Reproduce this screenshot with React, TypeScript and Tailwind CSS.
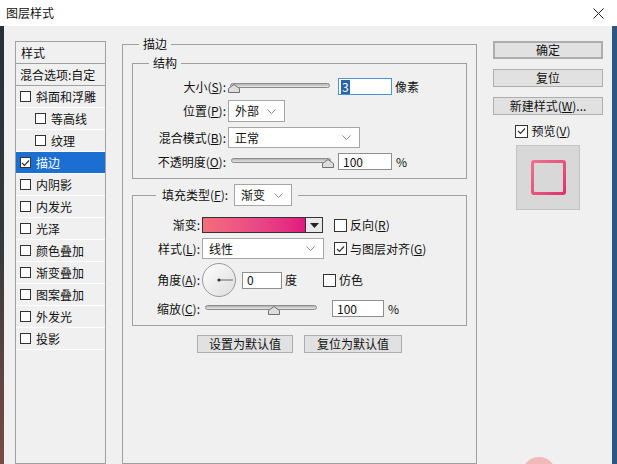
import React from "react";

// Layer style dialog (图层样式), stroke page selected
function Check({ on = false, small = false }: { on?: boolean; small?: boolean }) {
  return (
    <span
      className={
        small
          ? "flex h-[11px] w-[11px] shrink-0 items-center justify-center border border-[#333] bg-white"
          : "flex h-[13px] w-[13px] shrink-0 items-center justify-center border border-[#333] bg-white"
      }
    >
      {on && (
        <svg width="9" height="8" viewBox="0 0 9 8">
          <path d="M1 4 L3.5 6.5 L8 1.5" fill="none" stroke="#333" strokeWidth="1.2" />
        </svg>
      )}
    </span>
  );
}

function Chevron() {
  return (
    <svg width="9" height="5" viewBox="0 0 9 5">
      <path d="M0.5 0.5 L4.5 4.5 L8.5 0.5" fill="none" stroke="#8a8a8a" />
    </svg>
  );
}

function Select({ className, children }: { className: string; children: React.ReactNode }) {
  return (
    <div className={`flex items-center justify-between border border-[#a6a6a6] bg-white pl-[6px] pr-[8px] ${className}`}>
      <span>{children}</span>
      <Chevron />
    </div>
  );
}

function Slider({ className, thumb }: { className: string; thumb: string }) {
  return (
    <div className={`relative h-[14px] ${className}`}>
      <div className="mt-[3px] h-[5px] rounded-full border border-[#8c8c8c] bg-gradient-to-b from-[#b4b4b4] to-[#e6e6e6]" />
      <svg className={`absolute top-[4px] ${thumb}`} width="12" height="9" viewBox="0 0 12 9">
        <path d="M0.5 8.5 V4.5 L6 0.5 L11.5 4.5 V8.5 Z" fill="#dedede" stroke="#707070" />
      </svg>
    </div>
  );
}

function Input({ className, children }: { className: string; children: React.ReactNode }) {
  return (
    <div className={`flex h-[17px] items-center border border-[#8f8f8f] bg-white pl-[4px] ${className}`}>
      {children}
    </div>
  );
}

function Btn({ className, children }: { className: string; children: React.ReactNode }) {
  return (
    <button
      type="button"
      className={`flex h-[18px] items-center justify-center border border-[#adadad] bg-[#e1e1e1] ${className}`}
    >
      {children}
    </button>
  );
}

const styles = [
  { label: "斜面和浮雕" },
  { label: "等高线", sub: true },
  { label: "纹理", sub: true },
  { label: "描边", on: true },
  { label: "内阴影" },
  { label: "内发光" },
  { label: "光泽" },
  { label: "颜色叠加" },
  { label: "渐变叠加" },
  { label: "图案叠加" },
  { label: "外发光" },
  { label: "投影" },
];

export default function App() {
  return (
    <div className="relative h-[464px] w-[617px] overflow-hidden bg-[#f0f0f0] font-['Noto_Sans_CJK_SC',sans-serif] text-[12px] leading-none text-[#111]">
      {/* Title bar */}
      <div className="flex h-[26px] items-center justify-between bg-white pl-[6px] pr-[13px]">
        <span>图层样式</span>
        <svg width="11" height="11" viewBox="0 0 11 11">
          <path d="M0.5 0.5 L10.5 10.5 M10.5 0.5 L0.5 10.5" stroke="#222" strokeWidth="1" />
        </svg>
      </div>

      <div className="flex h-[438px]">
        <div className="w-[4px] bg-gradient-to-b from-[#263036] via-[#35393c] to-[#7b4b45]" />

        {/* Style list */}
        <div className="ml-[11px] mt-[15px] w-[91px] border border-[#a0a0a0]">
          <div className="flex h-[22px] items-center border-b border-[#a0a0a0] pl-[5px]">样式</div>
          <div className="flex h-[22px] items-center border-b border-[#a0a0a0] pl-[4px]">混合选项:自定</div>
          {styles.map((s) => (
            <div
              key={s.label}
              className={
                s.on
                  ? "flex h-[22px] items-center gap-[5px] border-b border-white bg-[#1c6fd2] pl-[4px] text-white"
                  : s.sub
                    ? "flex h-[22px] items-center gap-[5px] border-b border-white pl-[19px]"
                    : "flex h-[22px] items-center gap-[5px] border-b border-white pl-[4px]"
              }
            >
              <Check small on={s.on} />
              <span>{s.label}</span>
            </div>
          ))}
        </div>

        {/* Stroke settings */}
        <div className="ml-[16px] flex w-[355px] flex-col pt-[10px]">
          <fieldset className="flex-1 border border-[#a0a0a0]">
            <legend className="ml-[16px] px-[4px] leading-[16px]">描边</legend>

            <fieldset className="mx-[9px] mt-[3px] border border-[#a0a0a0] pb-[8px]">
              <legend className="ml-[16px] px-[4px] leading-[16px]">结构</legend>

              <div className="mt-[7px] flex h-[17px] items-center">
                <span className="w-[93px] text-right">大小(<u>S</u>):</span>
                <Slider className="ml-[4px] w-[100px]" thumb="left-[-2px]" />
                <div className="ml-[8px] flex h-[17px] w-[54px] items-center border border-[#4d94d6] bg-white pl-[2px]">
                  <span className="bg-[#2a64a8] px-[1px] py-[1px] text-white">3</span>
                </div>
                <span className="ml-[3px]">像素</span>
              </div>

              <div className="mt-[5px] flex h-[22px] items-center">
                <span className="w-[93px] text-right">位置(<u>P</u>):</span>
                <Select className="ml-[2px] h-[22px] w-[57px]">外部</Select>
              </div>

              <div className="mt-[5px] flex h-[21px] items-center">
                <span className="w-[93px] text-right">混合模式(<u>B</u>):</span>
                <Select className="ml-[2px] h-[21px] w-[132px]">正常</Select>
              </div>

              <div className="mt-[5px] flex h-[17px] items-center">
                <span className="w-[93px] text-right">不透明度(<u>O</u>):</span>
                <Slider className="ml-[5px] w-[100px]" thumb="right-[-3px]" />
                <Input className="ml-[7px] w-[54px]">100</Input>
                <span className="ml-[4px]">%</span>
              </div>
            </fieldset>

            <fieldset className="mx-[9px] mt-[5px] border border-[#a0a0a0] pb-[8px]">
              <legend className="ml-[23px] px-[6px]">
                <div className="flex h-[22px] items-center">
                  <span>填充类型(<u>F</u>):</span>
                  <Select className="ml-[6px] h-[22px] w-[58px]">渐变</Select>
                </div>
              </legend>

              <div className="mt-[11px] flex h-[16px] items-center">
                <span className="w-[67px] text-right">渐变:</span>
                <div className="ml-[2px] h-[16px] w-[104px] border border-[#333] bg-gradient-to-r from-[#f46d79] via-[#ea4a86] to-[#e2157f]" />
                <div className="flex h-[16px] w-[17px] items-center justify-center border border-l-0 border-[#333] bg-[#e8e8e8]">
                  <svg width="9" height="5" viewBox="0 0 9 5">
                    <path d="M0 0 H9 L4.5 5 Z" fill="#222" />
                  </svg>
                </div>
                <span className="ml-[11px] flex items-center gap-[3px]">
                  <Check />
                  <span>反向(<u>R</u>)</span>
                </span>
              </div>

              <div className="mt-[5px] flex h-[21px] items-center">
                <span className="w-[67px] text-right">样式(<u>L</u>):</span>
                <Select className="ml-[2px] h-[21px] w-[122px]">线性</Select>
                <span className="ml-[10px] flex items-center gap-[3px]">
                  <Check on />
                  <span>与图层对齐(<u>G</u>)</span>
                </span>
              </div>

              <div className="mt-[4px] flex h-[34px] items-center">
                <span className="w-[67px] text-right">角度(<u>A</u>):</span>
                <svg className="ml-[2px]" width="34" height="34" viewBox="0 0 34 34">
                  <defs>
                    <linearGradient id="dial" x1="0" y1="0" x2="1" y2="1">
                      <stop offset="0" stopColor="#ffffff" />
                      <stop offset="1" stopColor="#dcdcdc" />
                    </linearGradient>
                  </defs>
                  <circle cx="17" cy="17" r="16.5" fill="url(#dial)" stroke="#9a9a9a" />
                  <line x1="17" y1="17" x2="31" y2="17" stroke="#666" />
                  <circle cx="17" cy="17" r="1.6" fill="#333" />
                </svg>
                <Input className="ml-[6px] w-[40px]">0</Input>
                <span className="ml-[3px]">度</span>
                <span className="ml-[26px] flex items-center gap-[3px]">
                  <Check />
                  <span>仿色</span>
                </span>
              </div>

              <div className="mt-[3px] flex h-[17px] items-center">
                <span className="w-[67px] text-right">缩放(<u>C</u>):</span>
                <Slider className="ml-[5px] w-[112px]" thumb="left-[63px]" />
                <Input className="ml-[15px] w-[52px]">100</Input>
                <span className="ml-[4px]">%</span>
              </div>
            </fieldset>

            <div className="mt-[9px] flex justify-center gap-[11px]">
              <Btn className="w-[96px]">设置为默认值</Btn>
              <Btn className="w-[98px]">复位为默认值</Btn>
            </div>
          </fieldset>
        </div>

        {/* Right buttons */}
        <div className="ml-[16px] flex w-[110px] flex-col pt-[15px]">
          <Btn className="w-[110px] border-2 border-[#3678b0]">确定</Btn>
          <Btn className="mt-[10px] w-[110px]">复位</Btn>
          <Btn className="mt-[10px] w-[110px]">
            新建样式(<u>W</u>)...
          </Btn>
          <div className="mt-[9px] flex h-[14px] items-center justify-center gap-[3px] pr-[10px]">
            <Check on />
            <span>预览(<u>V</u>)</span>
          </div>
          <div className="mx-auto mt-[7px] flex h-[65px] w-[64px] items-center justify-center border border-[#c4c4c4] bg-[#d8d8d8]">
            <div className="h-[35px] w-[35px] rounded-[3px] bg-gradient-to-br from-[#ec7390] to-[#df2c6e] p-[3px]">
              <div className="h-full w-full rounded-[1px] bg-[#d8d8d8]" />
            </div>
          </div>
        </div>

        <div className="flex-1" />
        <div className="w-[5px] bg-[#2a5680]" />
      </div>

      <div className="absolute left-[522px] top-[457px] h-[34px] w-[34px] rounded-full bg-[#f2b9b9]" />
    </div>
  );
}
